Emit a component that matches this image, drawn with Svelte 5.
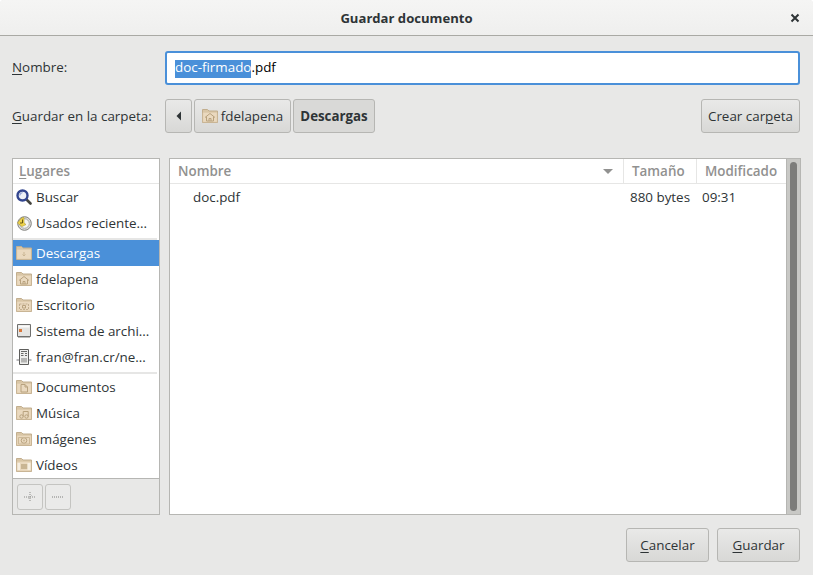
<script>
	const top = [
		{ icon: 'search', label: 'Buscar' },
		{ icon: 'clock', label: 'Usados reciente...' }
	];
	const folders = [
		{ icon: 'down', label: 'Descargas', selected: true },
		{ icon: 'home', label: 'fdelapena' },
		{ icon: 'desk', label: 'Escritorio' },
		{ icon: 'disk', label: 'Sistema de archi...' },
		{ icon: 'net', label: 'fran@fran.cr/ne...' }
	];
	const bookmarks = [
		{ icon: 'doc', label: 'Documentos' },
		{ icon: 'music', label: 'Música' },
		{ icon: 'photo', label: 'Imágenes' },
		{ icon: 'video', label: 'Vídeos' }
	];
</script>

{#snippet folder(kind)}
	<svg class="ico" width="16" height="16" viewBox="0 0 16 16">
		<path d="M0.500 1.500h5l1.500 1.500h8.500v11.500h-15z" fill="#d9c6a6" stroke="#c2ae8e" />
		<path d="M1 4.500h14v9.500h-14z" fill="#ead9bf" stroke="#dcc8a8" stroke-width="0.500" />
		{#if kind === 'down'}
			<path d="M8 7v3M6.500 9.500l1.500 1.500 1.500-1.500" fill="none" stroke="#c9b593" />
		{:else if kind === 'home'}
			<path d="M3 9.500l5-4 5 4M4.500 8.500v4.500h7v-4.500M7 13v-2.500h2v2.500" fill="none" stroke="#b8a27e" />
		{:else if kind === 'desk'}
			<path d="M3.500 7h9v5.500h-9z" fill="none" stroke="#c2ae8e" stroke-dasharray="2 1" /><path d="M6.500 8.500h3v2.500h-3z" fill="none" stroke="#b8a27e" />
		{:else if kind === 'doc'}
			<path d="M5 5.500h4l2.500 2.500v5h-6.500z" fill="none" stroke="#b8a27e" /><path d="M9 5.500v2.500h2.500" fill="none" stroke="#b8a27e" />
		{:else if kind === 'music'}
			<circle cx="5.500" cy="11.500" r="1.700" fill="none" stroke="#b8a27e" /><circle cx="10.500" cy="11.500" r="1.700" fill="none" stroke="#b8a27e" /><path d="M7.200 11.500V6.500h5v5" fill="none" stroke="#b8a27e" />
		{:else if kind === 'photo'}
			<circle cx="8" cy="9.500" r="2.800" fill="none" stroke="#b8a27e" /><circle cx="8" cy="9.500" r="1" fill="#c9b593" /><path d="M2.500 6.500h11v6.500h-11z" fill="none" stroke="#cdb998" />
		{:else if kind === 'video'}
			<path d="M5 7h6.500v5h-6.500z" fill="#c9b593" /><path d="M1.500 6h2.500v7h-2.500z" fill="#f6efe2" /><path d="M11.500 6h3v7h-3z" fill="#f6efe2" />
		{/if}
	</svg>
{/snippet}

{#snippet icon(kind)}
	{#if kind === 'search'}
		<svg class="ico" width="16" height="16" viewBox="0 0 16 16">
			<path d="M10.500 10.500l4 4" stroke="#45453f" stroke-width="2.600" stroke-linecap="round" />
			<circle cx="6.500" cy="6.500" r="5" fill="#eef1f7" stroke="#33468f" stroke-width="2.400" />
			<path d="M3.800 6.500a2.800 2.800 0 0 1 2.700-2.800" fill="none" stroke="#7f93cf" />
		</svg>
	{:else if kind === 'clock'}
		<svg class="ico" width="16" height="16" viewBox="0 0 16 16">
			<circle cx="8.500" cy="8.500" r="6.800" fill="#dededc" stroke="#7f7f7b" />
			<circle cx="8.500" cy="8.500" r="4.800" fill="#f4f4f2" stroke="#a9a9a5" />
			<path d="M1.500 8l4-5 2.500-.500v5.500l2 1.500-4 2z" fill="#f0d44c" stroke="#b09a2a" stroke-width="0.600" />
			<path d="M6.500 4.500v3.500h-2.500" fill="none" stroke="#6a5a14" />
		</svg>
	{:else if kind === 'disk'}
		<svg class="ico" width="16" height="16" viewBox="0 0 16 16">
			<path d="M1.500 1.500h13v12h-13z" fill="#e4e4e2" stroke="#6f6f6d" />
			<path d="M2.500 2.500h11v2h-11z" fill="#fafafa" />
			<path d="M3 6h3v3h-3z" fill="#d9783c" />
			<path d="M2 14.500h12" stroke="#bcbcba" />
		</svg>
	{:else if kind === 'net'}
		<svg class="ico" width="16" height="16" viewBox="0 0 16 16">
			<path d="M3.500 0.500h9v15h-9z" fill="#efefed" stroke="#5d5d5b" />
			<path d="M5 2.500h6M5 4.500h2.500M9 4.500h2M5 6.500h2.500M9 6.500h2" stroke="#6a6a68" />
			<path d="M5 9h6v4.500h-6z" fill="#b5b5b3" />
			<path d="M0.500 11h3M12.500 11h3" stroke="#77777a" />
		</svg>
	{:else}
		{@render folder(kind)}
	{/if}
{/snippet}

{#snippet place(item)}
	<div class="place" class:selected={item.selected}>
		{@render icon(item.icon)}
		<span>{item.label}</span>
	</div>
{/snippet}

<div class="dialog">
	<header class="titlebar">
		<span class="title">Guardar documento</span>
		<svg class="close" width="16" height="16" viewBox="0 0 16 16">
			<path d="M4.500 4.500l7 7M11.500 4.500l-7 7" stroke="#2e3436" stroke-width="2" />
		</svg>
	</header>

	<div class="body">
		<div class="row name-row">
			<label class="field-label" for="name"><u>N</u>ombre:</label>
			<div class="entry" id="name"><div><span class="sel">doc-firmado</span>.pdf</div></div>
		</div>

		<div class="row folder-row">
			<span class="field-label"><u>G</u>uardar en la carpeta:</span>
			<div class="path">
				<button class="btn back" aria-label="Atrás">
					<svg width="6" height="10" viewBox="0 0 6 10"><path d="M5 0.500v9l-4.500-4.500z" fill="#2e3436" /></svg>
				</button>
				<button class="btn crumb">{@render folder('home')}fdelapena</button>
				<button class="btn crumb active">Descargas</button>
			</div>
			<button class="btn create">Crear car<u>p</u>eta</button>
		</div>

		<div class="panes">
			<aside class="sidebar">
				<div class="side-head"><u>L</u>ugares</div>
				<div class="side-list">
					{#each top as item}{@render place(item)}{/each}
					<div class="sep"></div>
					{#each folders as item}{@render place(item)}{/each}
					<div class="sep"></div>
					{#each bookmarks as item}{@render place(item)}{/each}
				</div>
				<div class="side-tools">
					<button class="tool" aria-label="Añadir">
						<svg width="12" height="12" viewBox="0 0 12 12"><path d="M0 6h12M6 1v10" stroke="#8b8b88" stroke-dasharray="1 1" /><path d="M4 8l4-4" stroke="#a5a5a2" stroke-width="0.500" /></svg>
					</button>
					<button class="tool" aria-label="Quitar">
						<svg width="12" height="12" viewBox="0 0 12 12"><path d="M0 6h12" stroke="#7f7f7c" stroke-dasharray="1 1" /></svg>
					</button>
				</div>
			</aside>

			<section class="files">
				<div class="file-area">
					<div class="cols">
						<div class="col c-name">Nombre<i class="sort"></i></div>
						<div class="col c-size">Tamaño</div>
						<div class="col c-mod">Modificado</div>
					</div>
					<div class="file">
						<span class="f-name">doc.pdf</span>
						<span class="f-size">880 bytes</span>
						<span class="f-mod">09:31</span>
					</div>
				</div>
				<div class="scroll"><div class="thumb"></div></div>
			</section>
		</div>

		<div class="actions">
			<button class="btn act"><u>C</u>ancelar</button>
			<button class="btn act"><u>G</u>uardar</button>
		</div>
	</div>
</div>

<style>
:global(body) { background: #fff; }
.dialog { width: 813px; height: 575px; display: flex; flex-direction: column; background: #e8e8e7; font-family: "Open Sans", "Noto Sans", sans-serif; font-size: 13.400px; color: #2e3436; overflow: hidden; border-radius: 4px 4px 0 0; }
u { text-underline-offset: 2px; text-decoration-thickness: 1px; }

.titlebar { height: 35px; flex-shrink: 0; display: flex; align-items: center; justify-content: center; position: relative; background: linear-gradient(#f5f5f4, #efefee); border-bottom: 1px solid #a9a9a4; }
.title { font-weight: 700; font-size: 13.100px; color: #2e3436; }
.close { position: absolute; right: 10px; top: 10px; }

.body { flex: 1; display: flex; flex-direction: column; padding: 15px 13px 0 12px; min-height: 0; }
.row { display: flex; align-items: center; }
.field-label { width: 153px; flex-shrink: 0; color: #2e3436; }
.name-row .field-label { padding-bottom: 3px; }

.entry { flex: 1; height: 34px; box-sizing: border-box; background: #fff; border: 2px solid #4a90d9; border-radius: 3px; padding: 0 8px 3px; display: flex; align-items: center; color: #000; white-space: pre; }
.sel { background: linear-gradient(transparent 2px, #4a90d9 2px); color: #fff; padding-bottom: 2px; }

.folder-row { margin-top: 14px; justify-content: space-between; }
.path { display: flex; gap: 2px; flex: 1; }
.btn { height: 34px; box-sizing: border-box; border: 1px solid #b6b6b3; border-radius: 3px; background: linear-gradient(#e9e9e8, #d8d8d6); font: inherit; color: #2e3436; display: flex; align-items: center; justify-content: center; padding: 0; white-space: nowrap; }
.back { width: 27px; }
.crumb { width: 97px; gap: 3px; }
.crumb.active { width: 82px; background: #d9d9d7; font-weight: 700; font-size: 13.300px; }
.create { width: 99px; }

.panes { margin: 25px -1px 0 0; height: 357px; display: flex; gap: 9px; }
.sidebar { width: 148px; box-sizing: border-box; flex-shrink: 0; border: 1px solid #b6b6b3; background: #fff; display: flex; flex-direction: column; }
.side-head { height: 24px; flex-shrink: 0; display: flex; align-items: center; padding-left: 6px; color: #919190; border-bottom: 1px solid #e6e6e5; font-weight: 600; }
.side-list { flex: 1; min-height: 0; }
.place { height: 26px; display: flex; align-items: center; gap: 4px; padding-left: 3px; white-space: nowrap; }
.place span { padding-bottom: 1px; }
.place.selected { background: #4a90d9; color: #fff; }
.ico { flex-shrink: 0; }
.sep { height: 2px; margin: 2px 2px 0 0; background: #e6e6e5; }
.side-tools { height: 36px; flex-shrink: 0; box-sizing: border-box; background: #e8e8e7; border-top: 1px solid #b6b6b3; padding: 5px 4px; display: flex; gap: 2px; }
.tool { width: 26px; height: 26px; padding: 0; border: 1px solid #c4c4c1; border-radius: 3px; background: #eaeae9; display: flex; align-items: center; justify-content: center; }

.files { flex: 1; display: flex; box-sizing: border-box; border: 1px solid #b6b6b3; background: #fff; min-width: 0; }
.file-area { flex: 1; min-width: 0; }
.cols { height: 24px; display: flex; border-bottom: 1px solid #e6e6e5; color: #919190; font-weight: 600; }
.col { display: flex; align-items: center; padding-left: 8px; box-sizing: border-box; border-right: 1px solid #e6e6e5; position: relative; }
.c-name { flex: 1; }
.c-size { width: 73px; }
.c-mod { width: 89px; border-right: none; }
.sort { position: absolute; right: 10px; top: 10px; width: 0; height: 0; border-left: 5px solid transparent; border-right: 5px solid transparent; border-top: 5px solid #919190; }
.file { height: 26px; display: flex; align-items: center; color: #2e3436; padding-bottom: 1px; box-sizing: border-box; }
.f-name { flex: 1; padding-left: 23px; }
.f-size { width: 73px; white-space: nowrap; padding-left: 6px; box-sizing: border-box; }
.f-mod { width: 89px; padding-left: 5px; box-sizing: border-box; }
.scroll { width: 14px; flex-shrink: 0; background: #c8c8c5; border-left: 1px solid #b6b6b3; box-sizing: border-box; padding: 3px 3px; }
.thumb { height: 100%; background: #7c7c7a; border-radius: 4px; }

.actions { margin-top: 13px; display: flex; justify-content: flex-end; gap: 8px; }
.act { width: 83px; }
</style>
